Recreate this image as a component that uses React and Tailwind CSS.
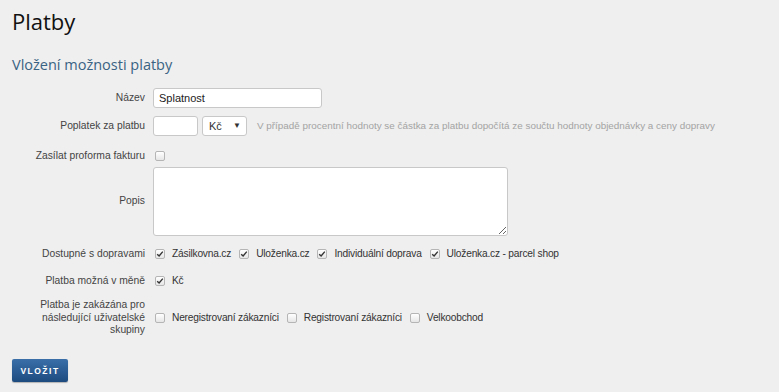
import { useState } from "react";

const Check = ({ checked }) => (
    <span className="inline-flex w-[10px] h-[10px] shrink-0 items-center justify-center rounded-[2px] border border-[#b5b5b5] bg-gradient-to-b from-white to-[#e6e6e6]">
        {checked ? (
            <svg width="8" height="8" viewBox="0 0 8 8">
                <path d="M1.2 4.2 L3.1 6 L6.8 1.6" fill="none" stroke="#333" strokeWidth="1.4" />
            </svg>
        ) : null}
    </span>
);

const Option = ({ checked, children }) => (
    <label className="flex items-center gap-[7px] mr-[8px] text-[10.2px] tracking-[-0.2px] text-[#333]">
        <Check checked={checked} />
        {children}
    </label>
);

const Label = ({ children }) => (
    <div className="w-[133px] shrink-0 text-right text-[10.3px] text-[#444] leading-[12.5px]">{children}</div>
);

export default function App() {
    const [name, setName] = useState("Splatnost");

    return (
        <div className="w-full h-screen bg-[#efefef] px-[12px] pt-[6px] font-['Open_Sans',sans-serif] overflow-hidden">
            <h1 className="text-[22px] leading-[30px] text-[#111]">Platby</h1>
            <h2 className="mt-[19px] text-[14.5px] leading-[20px] text-[#3a6383]">Vložení možnosti platby</h2>

            <form className="mt-[13px] flex flex-col font-['Liberation_Sans',sans-serif]">
                <div className="flex items-center h-[20px] gap-[8px]">
                    <Label>Název</Label>
                    <input
                        value={name}
                        onChange={(e) => setName(e.target.value)}
                        className="w-[169px] h-[20px] bg-white border border-[#c8c8c8] rounded-[3px] px-[5px] text-[11px] text-[#222] outline-none"
                    />
                </div>

                <div className="flex items-center h-[20px] mt-[8px] gap-[8px]">
                    <Label>Poplatek za platbu</Label>
                    <input className="w-[45px] h-[20px] bg-white border border-[#c8c8c8] rounded-[3px] px-[4px] text-[11px] outline-none" />
                    <div className="ml-[-4px] w-[45px] h-[20px] bg-white border border-[#c8c8c8] rounded-[3px] flex items-center justify-between pl-[6px] pr-[5px] text-[11px] text-[#333]">
                        <span>Kč</span>
                        <span className="text-[8px]">▼</span>
                    </div>
                    <span className="ml-[2px] text-[9.9px] text-[#a3a3a3] whitespace-nowrap">
                        V případě procentní hodnoty se částka za platbu dopočítá ze součtu hodnoty objednávky a ceny dopravy
                    </span>
                </div>

                <div className="flex items-center h-[16px] mt-[12px] gap-[10px]">
                    <Label>Zasílat proforma fakturu</Label>
                    <Check />
                </div>

                <div className="flex items-center mt-[3px] gap-[8px]">
                    <Label>Popis</Label>
                    <textarea className="w-[355px] h-[69px] bg-white border border-[#c8c8c8] rounded-[3px] outline-none" />
                </div>

                <div className="flex items-center h-[16px] mt-[10px] gap-[10px]">
                    <Label>Dostupné s dopravami</Label>
                    <div className="flex items-center">
                        <Option checked>Zásilkovna.cz</Option>
                        <Option checked>Uloženka.cz</Option>
                        <Option checked>Individuální doprava</Option>
                        <Option checked>Uloženka.cz - parcel shop</Option>
                    </div>
                </div>

                <div className="flex items-center h-[16px] mt-[11px] gap-[10px]">
                    <Label>Platba možná v měně</Label>
                    <Option checked>Kč</Option>
                </div>

                <div className="flex items-center mt-[10px] gap-[10px]">
                    <Label>
                        Platba je zakázána pro
                        <br />
                        následující uživatelské
                        <br />
                        skupiny
                    </Label>
                    <div className="flex items-center">
                        <Option>Neregistrovaní zákazníci</Option>
                        <Option>Registrovaní zákazníci</Option>
                        <Option>Velkoobchod</Option>
                    </div>
                </div>

                <div className="mt-[20px]">
                    <button
                        type="button"
                        className="w-[56px] h-[23px] rounded-[2px] bg-gradient-to-b from-[#3a6fa8] to-[#1d4b80] text-white text-[8.5px] font-bold tracking-[1.5px] shadow-[0_1px_1px_rgba(0,0,0,0.25)]"
                    >
                        VLOŽIT
                    </button>
                </div>
            </form>
        </div>
    );
}
